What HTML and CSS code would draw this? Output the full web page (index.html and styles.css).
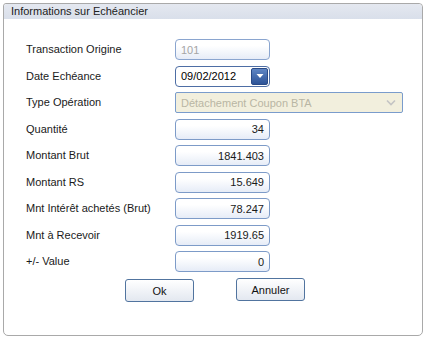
FILE: index.html
```html
<html>
<head>
  <title>Informations sur Echéancier</title>
  <link rel="stylesheet" href="styles.css">
</head>
<body>
  <div class="panel">
    <div class="panel-head">Informations sur Echéancier</div>
    <div class="form">
      <label>Transaction Origine</label>
      <div class="field small disabled">101</div>

      <label>Date Echéance</label>
      <div class="field small date">
        <span>09/02/2012</span>
        <span class="drop">
          <svg width="8" height="6" viewBox="0 0 8 6"><path d="M0.5 1 L7.5 1 L4 5 Z" fill="#fff"/></svg>
        </span>
      </div>

      <label>Type Opération</label>
      <div class="field wide select">
        <span>Détachement Coupon BTA</span>
        <svg class="chev" width="10" height="7" viewBox="0 0 10 7"><path d="M1 1.5 L5 5.5 L9 1.5" fill="none" stroke="#c4c4c4" stroke-width="1.6"/></svg>
      </div>

      <label>Quantité</label>
      <div class="field small num">34</div>

      <label>Montant Brut</label>
      <div class="field small num">1841.403</div>

      <label>Montant RS</label>
      <div class="field small num">15.649</div>

      <label>Mnt Intérêt achetés (Brut)</label>
      <div class="field small num">78.247</div>

      <label>Mnt à Recevoir</label>
      <div class="field small num">1919.65</div>

      <label>+/- Value</label>
      <div class="field small num">0</div>
    </div>
    <div class="actions">
      <button class="btn ok">Ok</button>
      <button class="btn cancel">Annuler</button>
    </div>
  </div>
</body>
</html>
```

FILE: styles.css
```css
body {
  margin: 0;
  background: #fff;
  font-family: "Liberation Sans", Arial, sans-serif;
  font-size: 11px;
  color: #1a1a1a;
}
.panel {
  margin: 3px 0 0 3px;
  width: 418px;
  height: 331px;
  border: 1px solid #a9a9a9;
  border-radius: 3px 4px 5px 5px;
}
.panel-head {
  height: 15px;
  line-height: 15px;
  padding-left: 7px;
  background: linear-gradient(#e4e8f0, #d9dfea);
  color: #222;
  font-size: 11px;
  border-radius: 3px 4px 0 0;
}
.form {
  display: grid;
  grid-template-columns: 149px auto;
  grid-auto-rows: 21px;
  row-gap: 5.5px;
  align-items: center;
  justify-items: start;
  padding: 20px 0 0 22px;
}
.form label {
  color: #1a1a1a;
  padding-bottom: 1px;
}
.field {
  box-sizing: border-box;
  height: 21px;
  border: 1px solid #7d9bc8;
  border-radius: 4px;
  background: linear-gradient(#ffffff 30%, #e6ecf7);
  padding: 0 5px;
  display: flex;
  align-items: center;
}
.small {
  width: 95px;
}
.num {
  justify-content: flex-end;
}
.disabled {
  color: #a5a5a5;
  border-color: #8aa5cf;
}
.date {
  background: #fff;
  border-color: #4e6ea5;
  justify-content: space-between;
  padding-right: 1px;
  color: #000;
}
.drop {
  width: 17px;
  height: 17px;
  box-sizing: border-box;
  border: 1px solid #2a4a86;
  border-radius: 2px;
  background: linear-gradient(#5f86c4, #2d5397);
  display: flex;
  align-items: center;
  justify-content: center;
}
.wide {
  width: 228px;
}
.select {
  background: #f2efdd;
  border-color: #7a9ccc;
  border-radius: 2px;
  color: #b9b6a4;
  justify-content: space-between;
  padding-right: 6px;
}
.actions {
  display: flex;
  gap: 42px;
  padding: 7px 0 0 121px;
  align-items: flex-start;
}
.btn {
  width: 69px;
  height: 23px;
  border: 1px solid #51749f;
  border-radius: 3px;
  background: linear-gradient(#ffffff, #eef1f6 60%, #e3e8f0);
  font-family: "Liberation Sans", Arial, sans-serif;
  font-size: 11px;
  color: #111;
  padding: 0;
}
.cancel {
  margin-top: -1px;
}
```
